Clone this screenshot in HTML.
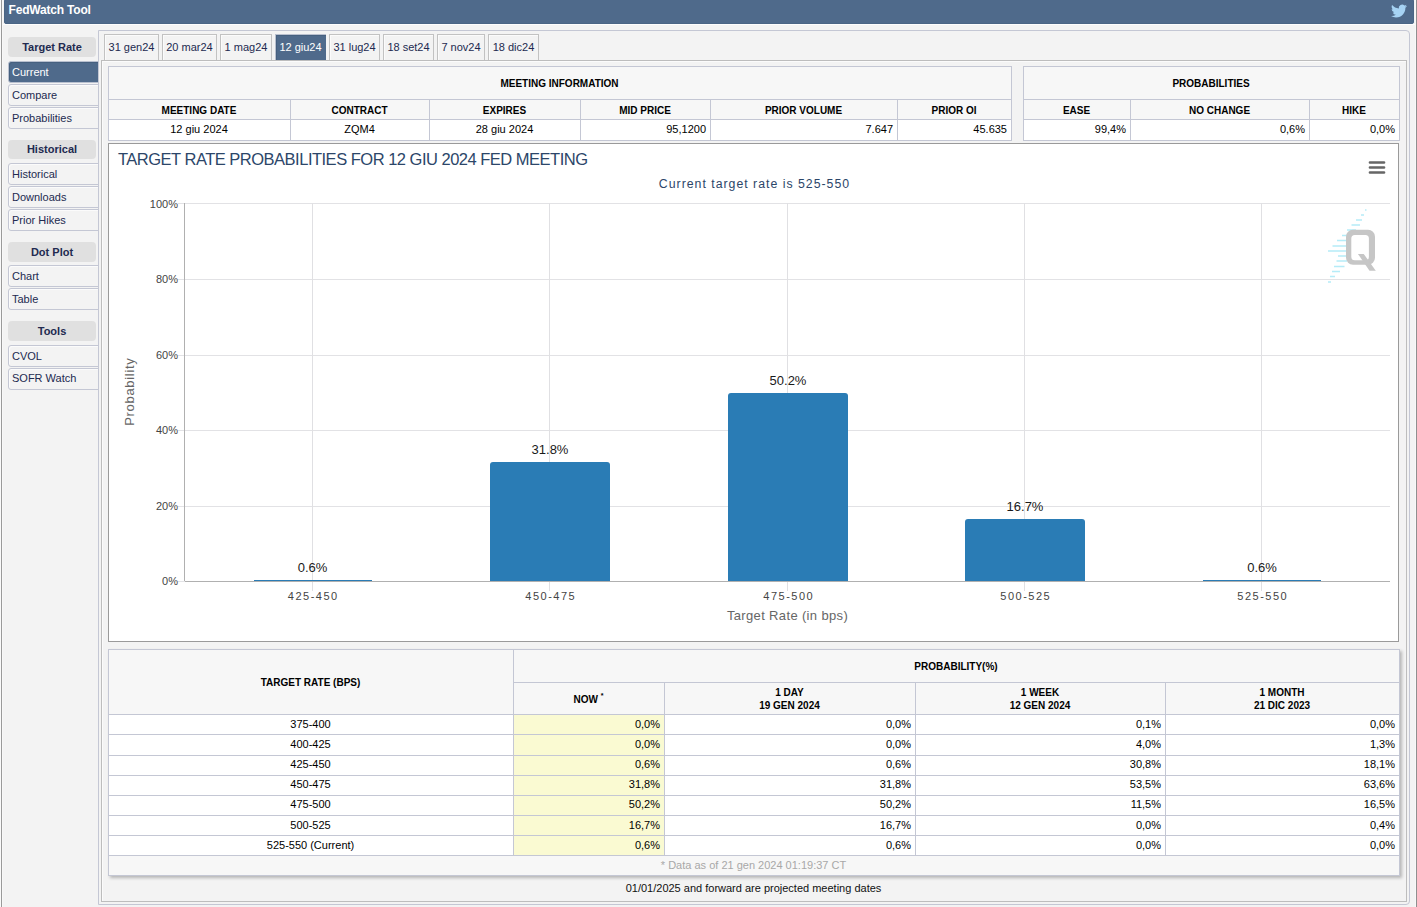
<!DOCTYPE html>
<html><head><meta charset="utf-8"><style>
html,body{margin:0;padding:0;}
body{width:1417px;height:907px;position:relative;overflow:hidden;background:#f3f3f3;font-family:"Liberation Sans", sans-serif;}
body>div{position:absolute;}
.t{white-space:nowrap;}
</style></head><body>
<div style="left:0px;top:0px;width:1px;height:907px;background:#fafafa"></div>
<div style="left:1px;top:0px;width:1px;height:907px;background:#9a9a9a"></div>
<div style="left:2px;top:0px;width:1px;height:907px;background:#f8f8f8"></div>
<div style="left:1416px;top:0px;width:1px;height:907px;background:#8f8f8f"></div>
<div style="left:1415px;top:0px;width:1px;height:907px;background:#f8f8f8"></div>
<div style="left:4px;top:-1px;width:1410px;height:25px;background:#4f6a8b;border-radius:2px;box-sizing:border-box;border:1px solid #4a6585"></div>
<div style="left:3px;top:24px;width:1412px;height:1px;background:#fdfdfd"></div>
<div class="t" style="left:8.6px;top:3.84px;font-size:12px;line-height:12px;font-weight:bold;color:#ffffff;letter-spacing:-0.2px">FedWatch Tool</div>
<svg style="position:absolute;left:1391px;top:3px" width="16" height="16" viewBox="0 0 24 24"><path fill="#a6d3f4" d="M23.953 4.57a10 10 0 01-2.825.775 4.958 4.958 0 002.163-2.723c-.951.555-2.005.959-3.127 1.184a4.92 4.92 0 00-8.384 4.482C7.69 8.095 4.067 6.13 1.64 3.162a4.822 4.822 0 00-.666 2.475c0 1.71.87 3.213 2.188 4.096a4.904 4.904 0 01-2.228-.616v.06a4.923 4.923 0 003.946 4.827 4.996 4.996 0 01-2.212.085 4.936 4.936 0 004.604 3.417 9.867 9.867 0 01-6.102 2.105c-.39 0-.779-.023-1.17-.067a13.995 13.995 0 007.557 2.209c9.053 0 13.998-7.496 13.998-13.985 0-.21 0-.42-.015-.63A9.935 9.935 0 0024 4.59z"/></svg>
<div style="left:8px;top:37px;width:88px;height:20px;background:#e0e0e0;border-radius:4px"></div>
<div class="t" style="left:8.00px;width:88px;text-align:center;top:41.69px;font-size:11px;line-height:11px;font-weight:bold;color:#222a50;">Target Rate</div>
<div style="left:8px;top:61px;width:92px;height:22px;background:#4f6a8b;border:1px solid #b9c0cf;box-sizing:border-box;border-radius:3px 0 0 3px;box-shadow:inset 1px 1px 0 #46607f"></div>
<div class="t" style="left:12px;top:66.69px;font-size:11px;line-height:11px;font-weight:normal;color:#ffffff;">Current</div>
<div style="left:8px;top:84px;width:92px;height:22px;background:#f3f3f3;border:1px solid #c4c7d4;box-sizing:border-box;border-radius:3px 0 0 3px;box-shadow:inset 1px 1px 0 #fbfbfb"></div>
<div class="t" style="left:12px;top:89.69px;font-size:11px;line-height:11px;font-weight:normal;color:#222a50;">Compare</div>
<div style="left:8px;top:107px;width:92px;height:22px;background:#f3f3f3;border:1px solid #c4c7d4;box-sizing:border-box;border-radius:3px 0 0 3px;box-shadow:inset 1px 1px 0 #fbfbfb"></div>
<div class="t" style="left:12px;top:112.69px;font-size:11px;line-height:11px;font-weight:normal;color:#222a50;">Probabilities</div>
<div style="left:8px;top:140px;width:88px;height:19px;background:#e0e0e0;border-radius:4px"></div>
<div class="t" style="left:8.00px;width:88px;text-align:center;top:143.69px;font-size:11px;line-height:11px;font-weight:bold;color:#222a50;">Historical</div>
<div style="left:8px;top:163px;width:92px;height:22px;background:#f3f3f3;border:1px solid #c4c7d4;box-sizing:border-box;border-radius:3px 0 0 3px;box-shadow:inset 1px 1px 0 #fbfbfb"></div>
<div class="t" style="left:12px;top:168.69px;font-size:11px;line-height:11px;font-weight:normal;color:#222a50;">Historical</div>
<div style="left:8px;top:186px;width:92px;height:22px;background:#f3f3f3;border:1px solid #c4c7d4;box-sizing:border-box;border-radius:3px 0 0 3px;box-shadow:inset 1px 1px 0 #fbfbfb"></div>
<div class="t" style="left:12px;top:191.69px;font-size:11px;line-height:11px;font-weight:normal;color:#222a50;">Downloads</div>
<div style="left:8px;top:209px;width:92px;height:22px;background:#f3f3f3;border:1px solid #c4c7d4;box-sizing:border-box;border-radius:3px 0 0 3px;box-shadow:inset 1px 1px 0 #fbfbfb"></div>
<div class="t" style="left:12px;top:214.69px;font-size:11px;line-height:11px;font-weight:normal;color:#222a50;">Prior Hikes</div>
<div style="left:8px;top:242px;width:88px;height:20px;background:#e0e0e0;border-radius:4px"></div>
<div class="t" style="left:8.00px;width:88px;text-align:center;top:246.69px;font-size:11px;line-height:11px;font-weight:bold;color:#222a50;">Dot Plot</div>
<div style="left:8px;top:265px;width:92px;height:22px;background:#f3f3f3;border:1px solid #c4c7d4;box-sizing:border-box;border-radius:3px 0 0 3px;box-shadow:inset 1px 1px 0 #fbfbfb"></div>
<div class="t" style="left:12px;top:270.69px;font-size:11px;line-height:11px;font-weight:normal;color:#222a50;">Chart</div>
<div style="left:8px;top:288px;width:92px;height:22px;background:#f3f3f3;border:1px solid #c4c7d4;box-sizing:border-box;border-radius:3px 0 0 3px;box-shadow:inset 1px 1px 0 #fbfbfb"></div>
<div class="t" style="left:12px;top:293.69px;font-size:11px;line-height:11px;font-weight:normal;color:#222a50;">Table</div>
<div style="left:8px;top:321px;width:88px;height:20px;background:#e0e0e0;border-radius:4px"></div>
<div class="t" style="left:8.00px;width:88px;text-align:center;top:325.69px;font-size:11px;line-height:11px;font-weight:bold;color:#222a50;">Tools</div>
<div style="left:8px;top:345px;width:92px;height:22px;background:#f3f3f3;border:1px solid #c4c7d4;box-sizing:border-box;border-radius:3px 0 0 3px;box-shadow:inset 1px 1px 0 #fbfbfb"></div>
<div class="t" style="left:12px;top:350.69px;font-size:11px;line-height:11px;font-weight:normal;color:#222a50;">CVOL</div>
<div style="left:8px;top:368px;width:92px;height:22px;background:#f3f3f3;border:1px solid #c4c7d4;box-sizing:border-box;border-radius:3px 0 0 3px;box-shadow:inset 1px 1px 0 #fbfbfb"></div>
<div class="t" style="left:12px;top:372.69px;font-size:11px;line-height:11px;font-weight:normal;color:#222a50;">SOFR Watch</div>
<div style="left:98px;top:30px;width:1312px;height:875px;background:#f3f3f3;border:1px solid #c4c7d4;box-sizing:border-box;border-radius:0 4px 4px 0"></div>
<div style="left:104px;top:34px;width:55px;height:27px;background:#f3f3f3;border:1px solid #c2c2c2;box-sizing:border-box;box-shadow:inset 1px 1px 0 #fbfbfb"></div>
<div class="t" style="left:91.50px;width:80px;text-align:center;top:41.69px;font-size:11px;line-height:11px;font-weight:normal;color:#222a50;">31 gen24</div>
<div style="left:162px;top:34px;width:55px;height:27px;background:#f3f3f3;border:1px solid #c2c2c2;box-sizing:border-box;box-shadow:inset 1px 1px 0 #fbfbfb"></div>
<div class="t" style="left:149.50px;width:80px;text-align:center;top:41.69px;font-size:11px;line-height:11px;font-weight:normal;color:#222a50;">20 mar24</div>
<div style="left:220px;top:34px;width:52px;height:27px;background:#f3f3f3;border:1px solid #c2c2c2;box-sizing:border-box;box-shadow:inset 1px 1px 0 #fbfbfb"></div>
<div class="t" style="left:206.00px;width:80px;text-align:center;top:41.69px;font-size:11px;line-height:11px;font-weight:normal;color:#222a50;">1 mag24</div>
<div style="left:275px;top:34px;width:51px;height:27px;background:#4f6a8b;border:1px solid #b9c0cf;border-right:0;box-sizing:border-box;box-shadow:inset 1px 1px 0 #46607f"></div>
<div class="t" style="left:260.50px;width:80px;text-align:center;top:41.69px;font-size:11px;line-height:11px;font-weight:normal;color:#ffffff;">12 giu24</div>
<div style="left:329px;top:34px;width:51px;height:27px;background:#f3f3f3;border:1px solid #c2c2c2;box-sizing:border-box;box-shadow:inset 1px 1px 0 #fbfbfb"></div>
<div class="t" style="left:314.50px;width:80px;text-align:center;top:41.69px;font-size:11px;line-height:11px;font-weight:normal;color:#222a50;">31 lug24</div>
<div style="left:383px;top:34px;width:51px;height:27px;background:#f3f3f3;border:1px solid #c2c2c2;box-sizing:border-box;box-shadow:inset 1px 1px 0 #fbfbfb"></div>
<div class="t" style="left:368.50px;width:80px;text-align:center;top:41.69px;font-size:11px;line-height:11px;font-weight:normal;color:#222a50;">18 set24</div>
<div style="left:437px;top:34px;width:48px;height:27px;background:#f3f3f3;border:1px solid #c2c2c2;box-sizing:border-box;box-shadow:inset 1px 1px 0 #fbfbfb"></div>
<div class="t" style="left:421.00px;width:80px;text-align:center;top:41.69px;font-size:11px;line-height:11px;font-weight:normal;color:#222a50;">7 nov24</div>
<div style="left:488px;top:34px;width:51px;height:27px;background:#f3f3f3;border:1px solid #c2c2c2;box-sizing:border-box;box-shadow:inset 1px 1px 0 #fbfbfb"></div>
<div class="t" style="left:473.50px;width:80px;text-align:center;top:41.69px;font-size:11px;line-height:11px;font-weight:normal;color:#222a50;">18 dic24</div>
<div style="left:101px;top:60px;width:1306px;height:842px;background:#f3f3f3;border:1px solid #bdbdbd;box-sizing:border-box;box-shadow:inset 1px 1px 0 #fbfbfb"></div>
<div style="left:108px;top:66px;width:904px;height:33px;background:#f7f7f7"></div>
<div style="left:108px;top:99px;width:904px;height:20px;background:#f7f7f7"></div>
<div style="left:108px;top:119px;width:904px;height:21px;background:#ffffff"></div>
<div style="left:108px;top:66px;width:904px;height:1px;background:#c4c7d4"></div>
<div style="left:108px;top:99px;width:904px;height:1px;background:#c4c7d4"></div>
<div style="left:108px;top:119px;width:904px;height:1px;background:#c4c7d4"></div>
<div style="left:108px;top:140px;width:904px;height:1px;background:#c4c7d4"></div>
<div style="left:108px;top:66px;width:1px;height:75px;background:#c4c7d4"></div>
<div style="left:1011px;top:66px;width:1px;height:75px;background:#c4c7d4"></div>
<div style="left:290px;top:99px;width:1px;height:42px;background:#c4c7d4"></div>
<div style="left:429px;top:99px;width:1px;height:42px;background:#c4c7d4"></div>
<div style="left:580px;top:99px;width:1px;height:42px;background:#c4c7d4"></div>
<div style="left:710px;top:99px;width:1px;height:42px;background:#c4c7d4"></div>
<div style="left:897px;top:99px;width:1px;height:42px;background:#c4c7d4"></div>
<div class="t" style="left:108.00px;width:903px;text-align:center;top:78.53px;font-size:10px;line-height:10px;font-weight:bold;color:#000;">MEETING INFORMATION</div>
<div class="t" style="left:108.00px;width:182px;text-align:center;top:105.53px;font-size:10px;line-height:10px;font-weight:bold;color:#000;">MEETING DATE</div>
<div class="t" style="left:108.00px;width:182px;text-align:center;top:123.69px;font-size:11px;line-height:11px;font-weight:normal;color:#000;">12 giu 2024</div>
<div class="t" style="left:290.00px;width:139px;text-align:center;top:105.53px;font-size:10px;line-height:10px;font-weight:bold;color:#000;">CONTRACT</div>
<div class="t" style="left:290.00px;width:139px;text-align:center;top:123.69px;font-size:11px;line-height:11px;font-weight:normal;color:#000;">ZQM4</div>
<div class="t" style="left:429.00px;width:151px;text-align:center;top:105.53px;font-size:10px;line-height:10px;font-weight:bold;color:#000;">EXPIRES</div>
<div class="t" style="left:429.00px;width:151px;text-align:center;top:123.69px;font-size:11px;line-height:11px;font-weight:normal;color:#000;">28 giu 2024</div>
<div class="t" style="left:580.00px;width:130px;text-align:center;top:105.53px;font-size:10px;line-height:10px;font-weight:bold;color:#000;">MID PRICE</div>
<div class="t" style="left:576.00px;width:130px;text-align:right;top:123.69px;font-size:11px;line-height:11px;font-weight:normal;color:#000;">95,1200</div>
<div class="t" style="left:710.00px;width:187px;text-align:center;top:105.53px;font-size:10px;line-height:10px;font-weight:bold;color:#000;">PRIOR VOLUME</div>
<div class="t" style="left:706.00px;width:187px;text-align:right;top:123.69px;font-size:11px;line-height:11px;font-weight:normal;color:#000;">7.647</div>
<div class="t" style="left:897.00px;width:114px;text-align:center;top:105.53px;font-size:10px;line-height:10px;font-weight:bold;color:#000;">PRIOR OI</div>
<div class="t" style="left:893.00px;width:114px;text-align:right;top:123.69px;font-size:11px;line-height:11px;font-weight:normal;color:#000;">45.635</div>
<div style="left:1023px;top:66px;width:377px;height:33px;background:#f7f7f7"></div>
<div style="left:1023px;top:99px;width:377px;height:20px;background:#f7f7f7"></div>
<div style="left:1023px;top:119px;width:377px;height:21px;background:#ffffff"></div>
<div style="left:1023px;top:66px;width:377px;height:1px;background:#c4c7d4"></div>
<div style="left:1023px;top:99px;width:377px;height:1px;background:#c4c7d4"></div>
<div style="left:1023px;top:119px;width:377px;height:1px;background:#c4c7d4"></div>
<div style="left:1023px;top:140px;width:377px;height:1px;background:#c4c7d4"></div>
<div style="left:1023px;top:66px;width:1px;height:75px;background:#c4c7d4"></div>
<div style="left:1399px;top:66px;width:1px;height:75px;background:#c4c7d4"></div>
<div style="left:1130px;top:99px;width:1px;height:42px;background:#c4c7d4"></div>
<div style="left:1309px;top:99px;width:1px;height:42px;background:#c4c7d4"></div>
<div class="t" style="left:1023.00px;width:376px;text-align:center;top:78.53px;font-size:10px;line-height:10px;font-weight:bold;color:#000;">PROBABILITIES</div>
<div class="t" style="left:1023.00px;width:107px;text-align:center;top:105.53px;font-size:10px;line-height:10px;font-weight:bold;color:#000;">EASE</div>
<div class="t" style="left:1019.00px;width:107px;text-align:right;top:123.69px;font-size:11px;line-height:11px;font-weight:normal;color:#000;">99,4%</div>
<div class="t" style="left:1130.00px;width:179px;text-align:center;top:105.53px;font-size:10px;line-height:10px;font-weight:bold;color:#000;">NO CHANGE</div>
<div class="t" style="left:1126.00px;width:179px;text-align:right;top:123.69px;font-size:11px;line-height:11px;font-weight:normal;color:#000;">0,6%</div>
<div class="t" style="left:1309.00px;width:90px;text-align:center;top:105.53px;font-size:10px;line-height:10px;font-weight:bold;color:#000;">HIKE</div>
<div class="t" style="left:1305.00px;width:90px;text-align:right;top:123.69px;font-size:11px;line-height:11px;font-weight:normal;color:#000;">0,0%</div>
<div style="left:108px;top:143px;width:1291px;height:499px;background:#ffffff;border:1px solid #9a9a9a;box-sizing:border-box"></div>
<div class="t" style="left:118px;top:151.03px;font-size:16.5px;line-height:16.5px;font-weight:normal;color:#2c4669;letter-spacing:-0.5px">TARGET RATE PROBABILITIES FOR 12 GIU 2024 FED MEETING</div>
<div class="t" style="left:554.50px;width:400px;text-align:center;top:177.59px;font-size:12.3px;line-height:12.3px;font-weight:normal;color:#2c4669;letter-spacing:1px">Current target rate is 525-550</div>
<svg style="position:absolute;left:1365px;top:156px" width="24" height="22"><path d="M 5 6.5 L 19 6.5 M 5 11.5 L 19 11.5 M 5 16.5 L 19 16.5" stroke="#666666" stroke-width="2.7" stroke-linecap="round"/></svg>
<div style="left:178px;top:203px;width:1212px;height:1px;background:#e2e2e5"></div>
<div style="left:178px;top:279px;width:1212px;height:1px;background:#e2e2e5"></div>
<div style="left:178px;top:355px;width:1212px;height:1px;background:#e2e2e5"></div>
<div style="left:178px;top:430px;width:1212px;height:1px;background:#e2e2e5"></div>
<div style="left:178px;top:506px;width:1212px;height:1px;background:#e2e2e5"></div>
<div style="left:178px;top:581px;width:1212px;height:1px;background:#e2e2e5"></div>
<div style="left:312px;top:203px;width:1px;height:388px;background:#e0e0e3"></div>
<div style="left:549px;top:203px;width:1px;height:388px;background:#e0e0e3"></div>
<div style="left:787px;top:203px;width:1px;height:388px;background:#e0e0e3"></div>
<div style="left:1024px;top:203px;width:1px;height:388px;background:#e0e0e3"></div>
<div style="left:1261px;top:203px;width:1px;height:388px;background:#e0e0e3"></div>
<svg style="position:absolute;left:0;top:0" width="1417" height="907"><rect x="1365" y="209.25" width="1.5" height="1.5" fill="#b5ecf8"/><rect x="1361" y="214.25" width="3" height="1.5" fill="#b5ecf8"/><rect x="1356" y="219.25" width="6" height="1.5" fill="#b5ecf8"/><rect x="1351.5" y="224.25" width="8.5" height="1.5" fill="#b5ecf8"/><rect x="1347" y="229.25" width="9" height="1.5" fill="#b5ecf8"/><rect x="1342" y="234.75" width="5" height="1.5" fill="#b5ecf8"/><rect x="1337" y="239.75" width="9" height="1.5" fill="#b5ecf8"/><rect x="1332.5" y="245.25" width="13.5" height="1.5" fill="#b5ecf8"/><rect x="1328" y="250.25" width="18" height="1.5" fill="#b5ecf8"/><rect x="1338" y="255.25" width="9" height="1.5" fill="#b5ecf8"/><rect x="1336.5" y="260.25" width="10.5" height="1.5" fill="#b5ecf8"/><rect x="1334" y="265.75" width="10.5" height="1.5" fill="#b5ecf8"/><rect x="1332" y="270.75" width="8" height="1.5" fill="#b5ecf8"/><rect x="1330" y="275.75" width="5" height="1.5" fill="#b5ecf8"/><rect x="1328" y="281.25" width="3" height="1.5" fill="#b5ecf8"/><path fill-rule="evenodd" fill="#c6c6c6" d="M1353 229.7 H1368 A7 7 0 0 1 1375 236.7 V257.7 A7 7 0 0 1 1368 264.7 H1353 A7 7 0 0 1 1346 257.7 V236.7 A7 7 0 0 1 1353 229.7 Z M1354.8 234.9 A3.5 3.5 0 0 0 1351.3 238.4 V256.8 A3.5 3.5 0 0 0 1354.8 260.3 H1365.4 A3.5 3.5 0 0 0 1368.9 256.8 V238.4 A3.5 3.5 0 0 0 1365.4 234.9 Z"/><path fill="#c6c6c6" d="M1357.9 253.9 L1363.7 253.9 L1375.8 270.7 L1369.5 270.7 Z"/></svg>
<div style="left:184px;top:203px;width:1px;height:378px;background:#b0b0b0"></div>
<div style="left:185px;top:581px;width:1205px;height:1px;background:#b0b0b0"></div>
<div class="t" style="left:118.00px;width:60px;text-align:right;top:198.69px;font-size:11px;line-height:11px;font-weight:normal;color:#444;">100%</div>
<div class="t" style="left:118.00px;width:60px;text-align:right;top:273.69px;font-size:11px;line-height:11px;font-weight:normal;color:#444;">80%</div>
<div class="t" style="left:118.00px;width:60px;text-align:right;top:349.69px;font-size:11px;line-height:11px;font-weight:normal;color:#444;">60%</div>
<div class="t" style="left:118.00px;width:60px;text-align:right;top:424.69px;font-size:11px;line-height:11px;font-weight:normal;color:#444;">40%</div>
<div class="t" style="left:118.00px;width:60px;text-align:right;top:500.69px;font-size:11px;line-height:11px;font-weight:normal;color:#444;">20%</div>
<div class="t" style="left:118.00px;width:60px;text-align:right;top:575.69px;font-size:11px;line-height:11px;font-weight:normal;color:#444;">0%</div>
<div class="t" style="left:79.5px;top:385px;width:100px;height:14px;line-height:14px;text-align:center;font-size:13px;color:#666;letter-spacing:0.7px;text-indent:0.7px;transform:rotate(-90deg)">Probability</div>
<div style="left:254px;top:580px;width:118px;height:1px;background:#2a7cb5"></div>
<div class="t" style="left:262.50px;width:100px;text-align:center;top:561.00px;font-size:13px;line-height:13px;font-weight:normal;color:#1a1a1a;">0.6%</div>
<div class="t" style="left:262.50px;width:100px;text-align:center;top:590.69px;font-size:11px;line-height:11px;font-weight:normal;color:#444;letter-spacing:1.5px;text-indent:1.5px">425-450</div>
<div style="left:490px;top:462px;width:120px;height:119px;background:#2a7cb5;border-radius:3px 3px 0 0"></div>
<div class="t" style="left:500.00px;width:100px;text-align:center;top:443.00px;font-size:13px;line-height:13px;font-weight:normal;color:#1a1a1a;">31.8%</div>
<div class="t" style="left:500.00px;width:100px;text-align:center;top:590.69px;font-size:11px;line-height:11px;font-weight:normal;color:#444;letter-spacing:1.5px;text-indent:1.5px">450-475</div>
<div style="left:728px;top:393px;width:120px;height:188px;background:#2a7cb5;border-radius:3px 3px 0 0"></div>
<div class="t" style="left:738.00px;width:100px;text-align:center;top:374.00px;font-size:13px;line-height:13px;font-weight:normal;color:#1a1a1a;">50.2%</div>
<div class="t" style="left:738.00px;width:100px;text-align:center;top:590.69px;font-size:11px;line-height:11px;font-weight:normal;color:#444;letter-spacing:1.5px;text-indent:1.5px">475-500</div>
<div style="left:965px;top:519px;width:120px;height:62px;background:#2a7cb5;border-radius:3px 3px 0 0"></div>
<div class="t" style="left:975.00px;width:100px;text-align:center;top:500.00px;font-size:13px;line-height:13px;font-weight:normal;color:#1a1a1a;">16.7%</div>
<div class="t" style="left:975.00px;width:100px;text-align:center;top:590.69px;font-size:11px;line-height:11px;font-weight:normal;color:#444;letter-spacing:1.5px;text-indent:1.5px">500-525</div>
<div style="left:1203px;top:580px;width:118px;height:1px;background:#2a7cb5"></div>
<div class="t" style="left:1212.00px;width:100px;text-align:center;top:561.00px;font-size:13px;line-height:13px;font-weight:normal;color:#1a1a1a;">0.6%</div>
<div class="t" style="left:1212.00px;width:100px;text-align:center;top:590.69px;font-size:11px;line-height:11px;font-weight:normal;color:#444;letter-spacing:1.5px;text-indent:1.5px">525-550</div>
<div class="t" style="left:637.50px;width:300px;text-align:center;top:609.00px;font-size:13px;line-height:13px;font-weight:normal;color:#666;letter-spacing:0.35px">Target Rate (in bps)</div>
<div style="left:108px;top:649px;width:1292px;height:227px;box-shadow:2px 2px 3px rgba(0,0,0,0.25);background:#f7f7f7"></div>
<div style="left:108px;top:714px;width:1292px;height:141px;background:#ffffff"></div>
<div style="left:514px;top:715px;width:150px;height:140px;background:#fafad2"></div>
<div style="left:108px;top:649px;width:1292px;height:1px;background:#c4c7d4"></div>
<div style="left:513px;top:682px;width:887px;height:1px;background:#c4c7d4"></div>
<div style="left:108px;top:714px;width:1292px;height:1px;background:#c4c7d4"></div>
<div style="left:108px;top:734px;width:1292px;height:1px;background:#c4c7d4"></div>
<div style="left:108px;top:755px;width:1292px;height:1px;background:#c4c7d4"></div>
<div style="left:108px;top:775px;width:1292px;height:1px;background:#c4c7d4"></div>
<div style="left:108px;top:795px;width:1292px;height:1px;background:#c4c7d4"></div>
<div style="left:108px;top:815px;width:1292px;height:1px;background:#c4c7d4"></div>
<div style="left:108px;top:835px;width:1292px;height:1px;background:#c4c7d4"></div>
<div style="left:108px;top:855px;width:1292px;height:1px;background:#c4c7d4"></div>
<div style="left:108px;top:875px;width:1292px;height:1px;background:#c4c7d4"></div>
<div style="left:108px;top:649px;width:1px;height:227px;background:#c4c7d4"></div>
<div style="left:1399px;top:649px;width:1px;height:227px;background:#c4c7d4"></div>
<div style="left:513px;top:649px;width:1px;height:207px;background:#c4c7d4"></div>
<div style="left:664px;top:682px;width:1px;height:174px;background:#c4c7d4"></div>
<div style="left:915px;top:682px;width:1px;height:174px;background:#c4c7d4"></div>
<div style="left:1165px;top:682px;width:1px;height:174px;background:#c4c7d4"></div>
<div class="t" style="left:110.50px;width:400px;text-align:center;top:677.53px;font-size:10px;line-height:10px;font-weight:bold;color:#000;">TARGET RATE (BPS)</div>
<div class="t" style="left:556.00px;width:800px;text-align:center;top:661.53px;font-size:10px;line-height:10px;font-weight:bold;color:#000;">PROBABILITY(%)</div>
<div class="t" style="left:513.50px;width:150px;text-align:center;top:694.53px;font-size:10px;line-height:10px;font-weight:bold;color:#000;">NOW <span style="font-size:7px;position:relative;top:-5px">*</span></div>
<div class="t" style="left:664.50px;width:250px;text-align:center;top:687.53px;font-size:10px;line-height:10px;font-weight:bold;color:#000;">1 DAY</div>
<div class="t" style="left:664.50px;width:250px;text-align:center;top:700.53px;font-size:10px;line-height:10px;font-weight:bold;color:#000;">19 GEN 2024</div>
<div class="t" style="left:915.00px;width:250px;text-align:center;top:687.53px;font-size:10px;line-height:10px;font-weight:bold;color:#000;">1 WEEK</div>
<div class="t" style="left:915.00px;width:250px;text-align:center;top:700.53px;font-size:10px;line-height:10px;font-weight:bold;color:#000;">12 GEN 2024</div>
<div class="t" style="left:1157.00px;width:250px;text-align:center;top:687.53px;font-size:10px;line-height:10px;font-weight:bold;color:#000;">1 MONTH</div>
<div class="t" style="left:1157.00px;width:250px;text-align:center;top:700.53px;font-size:10px;line-height:10px;font-weight:bold;color:#000;">21 DIC 2023</div>
<div class="t" style="left:110.50px;width:400px;text-align:center;top:718.69px;font-size:11px;line-height:11px;font-weight:normal;color:#000;">375-400</div>
<div class="t" style="left:460.00px;width:200px;text-align:right;top:718.69px;font-size:11px;line-height:11px;font-weight:normal;color:#000;">0,0%</div>
<div class="t" style="left:711.00px;width:200px;text-align:right;top:718.69px;font-size:11px;line-height:11px;font-weight:normal;color:#000;">0,0%</div>
<div class="t" style="left:961.00px;width:200px;text-align:right;top:718.69px;font-size:11px;line-height:11px;font-weight:normal;color:#000;">0,1%</div>
<div class="t" style="left:1195.00px;width:200px;text-align:right;top:718.69px;font-size:11px;line-height:11px;font-weight:normal;color:#000;">0,0%</div>
<div class="t" style="left:110.50px;width:400px;text-align:center;top:738.69px;font-size:11px;line-height:11px;font-weight:normal;color:#000;">400-425</div>
<div class="t" style="left:460.00px;width:200px;text-align:right;top:738.69px;font-size:11px;line-height:11px;font-weight:normal;color:#000;">0,0%</div>
<div class="t" style="left:711.00px;width:200px;text-align:right;top:738.69px;font-size:11px;line-height:11px;font-weight:normal;color:#000;">0,0%</div>
<div class="t" style="left:961.00px;width:200px;text-align:right;top:738.69px;font-size:11px;line-height:11px;font-weight:normal;color:#000;">4,0%</div>
<div class="t" style="left:1195.00px;width:200px;text-align:right;top:738.69px;font-size:11px;line-height:11px;font-weight:normal;color:#000;">1,3%</div>
<div class="t" style="left:110.50px;width:400px;text-align:center;top:758.69px;font-size:11px;line-height:11px;font-weight:normal;color:#000;">425-450</div>
<div class="t" style="left:460.00px;width:200px;text-align:right;top:758.69px;font-size:11px;line-height:11px;font-weight:normal;color:#000;">0,6%</div>
<div class="t" style="left:711.00px;width:200px;text-align:right;top:758.69px;font-size:11px;line-height:11px;font-weight:normal;color:#000;">0,6%</div>
<div class="t" style="left:961.00px;width:200px;text-align:right;top:758.69px;font-size:11px;line-height:11px;font-weight:normal;color:#000;">30,8%</div>
<div class="t" style="left:1195.00px;width:200px;text-align:right;top:758.69px;font-size:11px;line-height:11px;font-weight:normal;color:#000;">18,1%</div>
<div class="t" style="left:110.50px;width:400px;text-align:center;top:778.69px;font-size:11px;line-height:11px;font-weight:normal;color:#000;">450-475</div>
<div class="t" style="left:460.00px;width:200px;text-align:right;top:778.69px;font-size:11px;line-height:11px;font-weight:normal;color:#000;">31,8%</div>
<div class="t" style="left:711.00px;width:200px;text-align:right;top:778.69px;font-size:11px;line-height:11px;font-weight:normal;color:#000;">31,8%</div>
<div class="t" style="left:961.00px;width:200px;text-align:right;top:778.69px;font-size:11px;line-height:11px;font-weight:normal;color:#000;">53,5%</div>
<div class="t" style="left:1195.00px;width:200px;text-align:right;top:778.69px;font-size:11px;line-height:11px;font-weight:normal;color:#000;">63,6%</div>
<div class="t" style="left:110.50px;width:400px;text-align:center;top:798.69px;font-size:11px;line-height:11px;font-weight:normal;color:#000;">475-500</div>
<div class="t" style="left:460.00px;width:200px;text-align:right;top:798.69px;font-size:11px;line-height:11px;font-weight:normal;color:#000;">50,2%</div>
<div class="t" style="left:711.00px;width:200px;text-align:right;top:798.69px;font-size:11px;line-height:11px;font-weight:normal;color:#000;">50,2%</div>
<div class="t" style="left:961.00px;width:200px;text-align:right;top:798.69px;font-size:11px;line-height:11px;font-weight:normal;color:#000;">11,5%</div>
<div class="t" style="left:1195.00px;width:200px;text-align:right;top:798.69px;font-size:11px;line-height:11px;font-weight:normal;color:#000;">16,5%</div>
<div class="t" style="left:110.50px;width:400px;text-align:center;top:819.69px;font-size:11px;line-height:11px;font-weight:normal;color:#000;">500-525</div>
<div class="t" style="left:460.00px;width:200px;text-align:right;top:819.69px;font-size:11px;line-height:11px;font-weight:normal;color:#000;">16,7%</div>
<div class="t" style="left:711.00px;width:200px;text-align:right;top:819.69px;font-size:11px;line-height:11px;font-weight:normal;color:#000;">16,7%</div>
<div class="t" style="left:961.00px;width:200px;text-align:right;top:819.69px;font-size:11px;line-height:11px;font-weight:normal;color:#000;">0,0%</div>
<div class="t" style="left:1195.00px;width:200px;text-align:right;top:819.69px;font-size:11px;line-height:11px;font-weight:normal;color:#000;">0,4%</div>
<div class="t" style="left:110.50px;width:400px;text-align:center;top:839.69px;font-size:11px;line-height:11px;font-weight:normal;color:#000;">525-550 (Current)</div>
<div class="t" style="left:460.00px;width:200px;text-align:right;top:839.69px;font-size:11px;line-height:11px;font-weight:normal;color:#000;">0,6%</div>
<div class="t" style="left:711.00px;width:200px;text-align:right;top:839.69px;font-size:11px;line-height:11px;font-weight:normal;color:#000;">0,6%</div>
<div class="t" style="left:961.00px;width:200px;text-align:right;top:839.69px;font-size:11px;line-height:11px;font-weight:normal;color:#000;">0,0%</div>
<div class="t" style="left:1195.00px;width:200px;text-align:right;top:839.69px;font-size:11px;line-height:11px;font-weight:normal;color:#000;">0,0%</div>
<div class="t" style="left:453.50px;width:600px;text-align:center;top:859.69px;font-size:11px;line-height:11px;font-weight:normal;color:#a8a8a8;">* Data as of 21 gen 2024 01:19:37 CT</div>
<div class="t" style="left:453.50px;width:600px;text-align:center;top:882.69px;font-size:11px;line-height:11px;font-weight:normal;color:#111;">01/01/2025 and forward are projected meeting dates</div>
</body></html>
